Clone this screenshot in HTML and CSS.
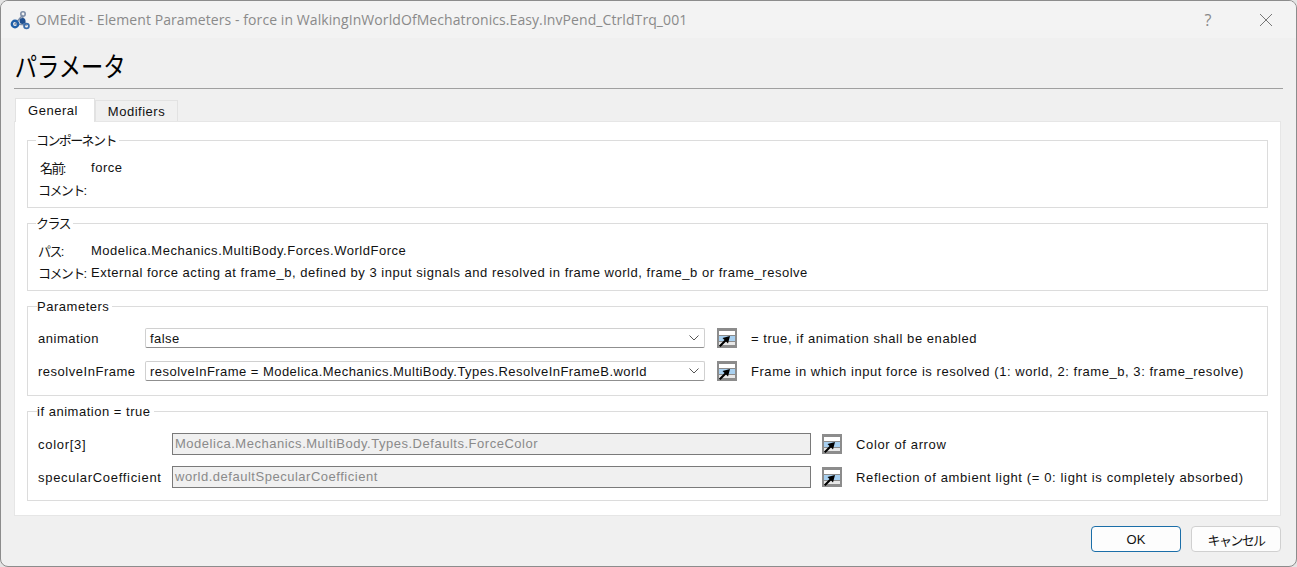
FILE: index.html
```html
<!DOCTYPE html>
<html lang="ja">
<head>
    <meta charset="UTF-8">
    <title>OMEdit - Element Parameters</title>
    <link rel="stylesheet" href="styles.css">
</head>
<body>
    <div class="window">
        <div class="titlebar">
            <svg class="app-icon" width="20" height="20" viewBox="0 0 20 20">
                <path d="M5 14 L12 6 L16 15 Z" fill="none" stroke="#7f8fa8" stroke-width="1.5"/>
                <circle cx="5" cy="14" r="3.2" fill="none" stroke="#1f5fa8" stroke-width="2.4"/>
                <circle cx="13" cy="4" r="2.2" fill="none" stroke="#7f8fa8" stroke-width="1.6"/>
                <circle cx="12.5" cy="11" r="3" fill="#1f4f90"/>
                <circle cx="16.5" cy="16" r="2.4" fill="none" stroke="#3a6cab" stroke-width="1.8"/>
            </svg>
            <span class="title">OMEdit - Element Parameters - force in WalkingInWorldOfMechatronics.Easy.InvPend_CtrldTrq_001</span>
            <span class="help">?</span>
            <svg class="close" width="14" height="14" viewBox="0 0 14 14">
                <path d="M1 1 L13 13 M13 1 L1 13" stroke="#777" stroke-width="1" fill="none"/>
            </svg>
        </div>

        <div class="content">
            <h1 class="heading">パラメータ</h1>
            <div class="rule"></div>

            <div class="tabs">
                <div class="tab active">General</div>
                <div class="tab">Modifiers</div>
            </div>

            <div class="panel">
                <fieldset class="group info">
                    <legend class="ja">コンポーネント</legend>
                    <div class="info-row"><span class="info-label ja name-label">名前:</span><span>force</span></div>
                    <div class="info-row"><span class="info-label ja">コメント:</span><span></span></div>
                </fieldset>

                <fieldset class="group info">
                    <legend class="ja">クラス</legend>
                    <div class="info-row"><span class="info-label ja">パス:</span><span>Modelica.Mechanics.MultiBody.Forces.WorldForce</span></div>
                    <div class="info-row"><span class="info-label ja">コメント:</span><span>External force acting at frame_b, defined by 3 input signals and resolved in frame world, frame_b or frame_resolve</span></div>
                </fieldset>

                <fieldset class="group params">
                    <legend>Parameters</legend>
                    <div class="param-row">
                        <span class="param-label">animation</span>
                        <div class="select">false<svg width="10" height="6" viewBox="0 0 10 6"><path d="M0.5 0.5 L5 5 L9.5 0.5" fill="none" stroke="#555"/></svg></div>
                        <svg class="edit-icon" width="20" height="20" viewBox="0 0 20 20"><use href="#edit"/></svg>
                        <span class="param-desc">= true, if animation shall be enabled</span>
                    </div>
                    <div class="param-row">
                        <span class="param-label">resolveInFrame</span>
                        <div class="select">resolveInFrame = Modelica.Mechanics.MultiBody.Types.ResolveInFrameB.world<svg width="10" height="6" viewBox="0 0 10 6"><path d="M0.5 0.5 L5 5 L9.5 0.5" fill="none" stroke="#555"/></svg></div>
                        <svg class="edit-icon" width="20" height="20" viewBox="0 0 20 20"><use href="#edit"/></svg>
                        <span class="param-desc">Frame in which input force is resolved (1: world, 2: frame_b, 3: frame_resolve)</span>
                    </div>
                </fieldset>

                <fieldset class="group params anim">
                    <legend>if animation = true</legend>
                    <div class="param-row">
                        <span class="param-label">color[3]</span>
                        <div class="field">Modelica.Mechanics.MultiBody.Types.Defaults.ForceColor</div>
                        <svg class="edit-icon" width="20" height="20" viewBox="0 0 20 20"><use href="#edit"/></svg>
                        <span class="param-desc">Color of arrow</span>
                    </div>
                    <div class="param-row">
                        <span class="param-label">specularCoefficient</span>
                        <div class="field">world.defaultSpecularCoefficient</div>
                        <svg class="edit-icon" width="20" height="20" viewBox="0 0 20 20"><use href="#edit"/></svg>
                        <span class="param-desc">Reflection of ambient light (= 0: light is completely absorbed)</span>
                    </div>
                </fieldset>
            </div>

            <div class="buttons">
                <button class="btn default">OK</button>
                <button class="btn ja">キャンセル</button>
            </div>
        </div>
    </div>

    <svg width="0" height="0" class="defs">
        <symbol id="edit" viewBox="0 0 20 20">
            <rect width="20" height="20" fill="#8c8c8c"/>
            <rect x="2" y="3" width="16" height="4" fill="#fff"/>
            <rect x="2" y="8" width="16" height="5" fill="#a8d0f0"/>
            <rect x="2" y="14" width="16" height="3" fill="#e8e8e8"/>
            <path d="M13 8 L5.5 10 L7.5 12 L2 17.5 L3.5 19 L9 13.5 L11 15.5 Z" fill="#000"/>
        </symbol>
    </svg>
</body>
</html>
```

FILE: styles.css
```css
* {
    box-sizing: border-box;
}

html, body {
    margin: 0;
    height: 100%;
    overflow: hidden;
}

body {
    background-color: #e4e4e4;
    font-family: "Liberation Sans", "Noto Sans CJK JP", sans-serif;
    font-size: 13px;
    letter-spacing: 0.52px;
    color: #111;
}

.ja {
    font-size: 13px;
    letter-spacing: -1.6px;
}

.window {
    height: 567px;
    background-color: #f0f0f0;
    border: 1px solid #8c8c8c;
    border-radius: 8px;
    overflow: hidden;
}

.titlebar {
    display: flex;
    align-items: center;
    height: 37px;
    padding-left: 9px;
    background-color: #f3f3f3;
}

.app-icon {
    margin-right: 6px;
}

.title {
    flex: 1;
    font-family: "Open Sans", sans-serif;
    font-size: 14px;
    letter-spacing: 0.08px;
    color: #8a8a8a;
}

.help {
    margin-right: 47px;
    font-family: "Open Sans", sans-serif;
    font-size: 16px;
    color: #888;
}

.close {
    margin-right: 23px;
}

.content {
    padding: 0 13px;
}

/* the original glyphs are tall and narrow */
.heading {
    margin: 0;
    height: 50px;
    padding: 13px 0 0 1px;
    font-size: 27px;
    letter-spacing: 0;
    line-height: 35px;
    font-weight: 400;
    color: #000;
    transform: scaleX(0.825);
    transform-origin: left;
}

.rule {
    height: 1px;
    width: 1269px;
    background-color: #a0a0a0;
}

.tabs {
    display: flex;
    align-items: flex-end;
    height: 23px;
    margin-top: 9px;
    margin-left: 1px;
}

.tab {
    height: 21px;
    width: 83px;
    line-height: 21px;
    text-align: center;
    background-color: #f0f0f0;
    border: 1px solid #e2e2e2;
    border-bottom: none;
}

.tab.active {
    height: 24px;
    width: 80px;
    padding-right: 4px;
    line-height: 23px;
    background-color: #fff;
    position: relative;
    margin-bottom: -1px;
}

.panel {
    width: 1267px;
    height: 395px;
    padding: 11px 12px 0;
    background-color: #fff;
    border: 1px solid #e6e6e6;
}

.group {
    margin: 0 0 8px;
    padding: 0 10px;
    min-width: 0;
    border: 1px solid #dcdcdc;
}

.group legend {
    padding: 0 3px 0 0;
    margin-left: -1px;
    line-height: 15px;
}

.group legend.ja {
    margin-left: -2px;
}

.info {
    height: 75px;
}

.info-row {
    display: flex;
    height: 22px;
    align-items: center;
}

.info-row:first-of-type {
    margin-top: 8px;
}

.info-label {
    width: 53px;
    white-space: nowrap;
}

.name-label {
    padding-left: 2px;
}

.params {
    height: 97px;
}

.param-row {
    display: flex;
    align-items: center;
    height: 20px;
    margin-top: 13px;
}

.param-row:first-of-type {
    margin-top: 14px;
}

.param-label {
    width: 107px;
}

.select {
    display: flex;
    align-items: center;
    justify-content: space-between;
    width: 560px;
    height: 20px;
    padding: 0 5px 0 4px;
    letter-spacing: 0.46px;
    background-color: #fff;
    border: 1px solid #d0d0d0;
    border-bottom-color: #8f8f8f;
    border-radius: 2px;
}

.edit-icon {
    margin-left: 12px;
    flex: none;
}

.param-desc {
    margin-left: 14px;
    letter-spacing: 0.55px;
    white-space: nowrap;
}

.anim .param-row {
    height: 22px;
    margin-top: 11px;
}

.anim .param-row:first-of-type {
    margin-top: 14px;
}

.anim .param-label {
    width: 134px;
    letter-spacing: 0.7px;
}

.field {
    width: 639px;
    height: 22px;
    line-height: 20px;
    padding-left: 2px;
    background-color: #f0f0f0;
    border: 1px solid #7a7a7a;
    color: #8a8a8a;
}

.anim .edit-icon {
    margin-left: 11px;
}

.anim .param-desc {
    letter-spacing: 0.63px;
}

.buttons {
    display: flex;
    gap: 10px;
    justify-content: flex-end;
    width: 1267px;
    margin-top: 10px;
}

.btn {
    width: 90px;
    height: 26px;
    font-family: inherit;
    font-size: 13px;
    color: #111;
    background-color: #fdfdfd;
    border: 1px solid #d0d0d0;
    border-radius: 4px;
}

.btn.default {
    border-color: #1b6ea8;
}

.defs {
    position: absolute;
}
```
